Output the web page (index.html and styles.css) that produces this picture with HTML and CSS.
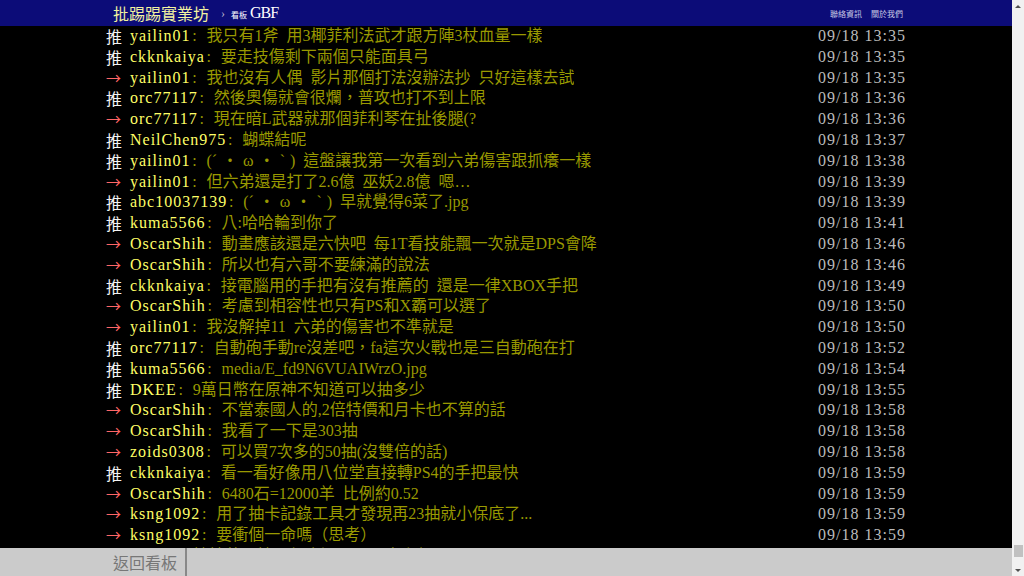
FILE: index.html
```html
<!DOCTYPE html>
<html lang="zh-Hant-TW">
<head>
    <meta charset="UTF-8">
    <meta name="viewport" content="width=device-width, initial-scale=1.0">
    <title>[閒聊] GBF 看板 - 批踢踢實業坊</title>
    <link rel="stylesheet" href="styles.css">
</head>
<body>
    <div class="window">
        <div class="page">
            <div class="topbar">
                <div class="container topbar-inner">
                    <a class="logo" href="#">批踢踢實業坊</a>
                    <span class="caret">›</span>
                    <a class="board" href="#"><span class="board-label">看板</span> GBF</a>
                    <div class="right">
                        <a href="#">聯絡資訊</a>
                        <a href="#">關於我們</a>
                    </div>
                </div>
            </div>

            <div class="main">
                <div class="container">
                    <div class="push"><span class="push-tag">推</span><span class="push-userid">yailin01</span><span class="push-content"><span class="colon">:</span> 我只有1斧 用3椰菲利法武才跟方陣3杖血量一樣</span><span class="push-ipdatetime">09/18 13:35</span></div>
                    <div class="push"><span class="push-tag">推</span><span class="push-userid">ckknkaiya</span><span class="push-content"><span class="colon">:</span> 要走技傷剩下兩個只能面具弓</span><span class="push-ipdatetime">09/18 13:35</span></div>
                    <div class="push"><span class="push-tag arrow">→</span><span class="push-userid">yailin01</span><span class="push-content"><span class="colon">:</span> 我也沒有人偶 影片那個打法沒辦法抄 只好這樣去試</span><span class="push-ipdatetime">09/18 13:35</span></div>
                    <div class="push"><span class="push-tag">推</span><span class="push-userid">orc77117</span><span class="push-content"><span class="colon">:</span> 然後奧傷就會很爛，普攻也打不到上限</span><span class="push-ipdatetime">09/18 13:36</span></div>
                    <div class="push"><span class="push-tag arrow">→</span><span class="push-userid">orc77117</span><span class="push-content"><span class="colon">:</span> 現在暗L武器就那個菲利琴在扯後腿(?</span><span class="push-ipdatetime">09/18 13:36</span></div>
                    <div class="push"><span class="push-tag">推</span><span class="push-userid">NeilChen975</span><span class="push-content"><span class="colon">:</span> 蝴蝶結呢</span><span class="push-ipdatetime">09/18 13:37</span></div>
                    <div class="push"><span class="push-tag">推</span><span class="push-userid">yailin01</span><span class="push-content"><span class="colon">:</span> (<span class="kao">´・ω・`</span>) 這盤讓我第一次看到六弟傷害跟抓癢一樣</span><span class="push-ipdatetime">09/18 13:38</span></div>
                    <div class="push"><span class="push-tag arrow">→</span><span class="push-userid">yailin01</span><span class="push-content"><span class="colon">:</span> 但六弟還是打了2.6億 巫妖2.8億 嗯…</span><span class="push-ipdatetime">09/18 13:39</span></div>
                    <div class="push"><span class="push-tag">推</span><span class="push-userid">abc10037139</span><span class="push-content"><span class="colon">:</span> (<span class="kao">´・ω・`</span>) 早就覺得6菜了.jpg</span><span class="push-ipdatetime">09/18 13:39</span></div>
                    <div class="push"><span class="push-tag">推</span><span class="push-userid">kuma5566</span><span class="push-content"><span class="colon">:</span> 八:哈哈輪到你了</span><span class="push-ipdatetime">09/18 13:41</span></div>
                    <div class="push"><span class="push-tag arrow">→</span><span class="push-userid">OscarShih</span><span class="push-content"><span class="colon">:</span> 動畫應該還是六快吧 每1T看技能飄一次就是DPS會降</span><span class="push-ipdatetime">09/18 13:46</span></div>
                    <div class="push"><span class="push-tag arrow">→</span><span class="push-userid">OscarShih</span><span class="push-content"><span class="colon">:</span> 所以也有六哥不要練滿的說法</span><span class="push-ipdatetime">09/18 13:46</span></div>
                    <div class="push"><span class="push-tag">推</span><span class="push-userid">ckknkaiya</span><span class="push-content"><span class="colon">:</span> 接電腦用的手把有沒有推薦的 還是一律XBOX手把</span><span class="push-ipdatetime">09/18 13:49</span></div>
                    <div class="push"><span class="push-tag arrow">→</span><span class="push-userid">OscarShih</span><span class="push-content"><span class="colon">:</span> 考慮到相容性也只有PS和X霸可以選了</span><span class="push-ipdatetime">09/18 13:50</span></div>
                    <div class="push"><span class="push-tag arrow">→</span><span class="push-userid">yailin01</span><span class="push-content"><span class="colon">:</span> 我沒解掉11 六弟的傷害也不準就是</span><span class="push-ipdatetime">09/18 13:50</span></div>
                    <div class="push"><span class="push-tag">推</span><span class="push-userid">orc77117</span><span class="push-content"><span class="colon">:</span> 自動砲手動re沒差吧，fa這次火戰也是三自動砲在打</span><span class="push-ipdatetime">09/18 13:52</span></div>
                    <div class="push"><span class="push-tag">推</span><span class="push-userid">kuma5566</span><span class="push-content"><span class="colon">:</span> media/E_fd9N6VUAIWrzO.jpg</span><span class="push-ipdatetime">09/18 13:54</span></div>
                    <div class="push"><span class="push-tag">推</span><span class="push-userid">DKEE</span><span class="push-content"><span class="colon">:</span> 9萬日幣在原神不知道可以抽多少</span><span class="push-ipdatetime">09/18 13:55</span></div>
                    <div class="push"><span class="push-tag arrow">→</span><span class="push-userid">OscarShih</span><span class="push-content"><span class="colon">:</span> 不當泰國人的,2倍特價和月卡也不算的話</span><span class="push-ipdatetime">09/18 13:58</span></div>
                    <div class="push"><span class="push-tag arrow">→</span><span class="push-userid">OscarShih</span><span class="push-content"><span class="colon">:</span> 我看了一下是303抽</span><span class="push-ipdatetime">09/18 13:58</span></div>
                    <div class="push"><span class="push-tag arrow">→</span><span class="push-userid">zoids0308</span><span class="push-content"><span class="colon">:</span> 可以買7次多的50抽(沒雙倍的話)</span><span class="push-ipdatetime">09/18 13:58</span></div>
                    <div class="push"><span class="push-tag">推</span><span class="push-userid">ckknkaiya</span><span class="push-content"><span class="colon">:</span> 看一看好像用八位堂直接轉PS4的手把最快</span><span class="push-ipdatetime">09/18 13:59</span></div>
                    <div class="push"><span class="push-tag arrow">→</span><span class="push-userid">OscarShih</span><span class="push-content"><span class="colon">:</span> 6480石=12000羊 比例約0.52</span><span class="push-ipdatetime">09/18 13:59</span></div>
                    <div class="push"><span class="push-tag arrow">→</span><span class="push-userid">ksng1092</span><span class="push-content"><span class="colon">:</span> 用了抽卡記錄工具才發現再23抽就小保底了...</span><span class="push-ipdatetime">09/18 13:59</span></div>
                    <div class="push"><span class="push-tag arrow">→</span><span class="push-userid">ksng1092</span><span class="push-content"><span class="colon">:</span> 要衝個一命嗎（思考）</span><span class="push-ipdatetime">09/18 13:59</span></div>
                    <div class="push"><span class="push-tag">推</span><span class="push-userid">DKEE</span><span class="push-content"><span class="colon">:</span> 抽抽共24抽，保底還可以再去上個</span><span class="push-ipdatetime">09/18 14:00</span></div>
                </div>
            </div>

            <div class="navbar">
                <div class="container">
                    <a class="btn-board" href="#">返回看板</a>
                </div>
            </div>
        </div>

        <div class="scrollbar">
            <span class="scroll-arrow up"></span>
            <span class="scroll-track"><span class="scroll-thumb"></span></span>
            <span class="scroll-arrow down"></span>
        </div>
    </div>
</body>
</html>
```

FILE: styles.css
```css
:root {
    --topbar-bg: #0c0c78; /* navy top bar */
    --page-bg: #000000;
    --nav-bg: #cbcbcb; /* bottom navigation */
    --tag-color: #f4f4f4;
    --arrow-color: #ff6666;
    --userid-color: #ffff66;
    --content-color: #999900;
    --time-color: #bbbbbb;
}
html, body {
    margin: 0;
    padding: 0;
    height: 100%;
    overflow: hidden;
}
body {
    font-family: "Liberation Serif", "Noto Sans CJK TC", serif;
    font-size: 16px;
    background-color: var(--page-bg);
}
a {
    text-decoration: none;
    color: inherit;
}
.window {
    display: flex;
    height: 100%;
}
.page {
    flex: 1;
    display: flex;
    flex-direction: column;
    min-width: 0;
}
.container {
    width: 800px;
    margin: 0 auto;
}

/* top bar */
.topbar {
    background: var(--topbar-bg);
    height: 26px;
    flex: none;
}
.topbar-inner {
    display: flex;
    align-items: center;
    height: 26px;
}
.logo {
    font-family: "Noto Sans CJK TC", sans-serif;
    font-size: 16px;
    line-height: 26px;
    color: #f2f2a0;
    padding-left: 7px;
}
.caret {
    color: #b8b8d0;
    font-size: 12px;
    margin: 0 6px 0 12px;
}
.board {
    color: #ffffff;
    font-size: 16px;
    letter-spacing: -1px;
}
.board-label {
    font-family: "Noto Sans CJK TC", sans-serif;
    font-size: 8px;
    letter-spacing: 0;
}
.right {
    margin-left: auto;
    padding-right: 3px;
    font-family: "Noto Sans CJK TC", sans-serif;
    font-size: 8px;
    display: flex;
    gap: 9px;
}
.right a {
    color: #c8c8e4;
}

/* push list */
.main {
    flex: 1;
    overflow: hidden;
}
.push {
    display: flex;
    line-height: 20.8px;
    height: 20.8px;
    white-space: nowrap;
}
.push-tag {
    display: inline-block;
    width: 24px;
    color: var(--tag-color);
    font-family: "Noto Sans CJK TC", sans-serif;
    flex: none;
}
.push-tag.arrow {
    color: var(--arrow-color);
    font-size: 15px;
}
.push-userid {
    color: var(--userid-color);
    letter-spacing: 1px;
    flex: none;
}
.push-content {
    color: var(--content-color);
    word-spacing: 4px;
    overflow: hidden;
}
.colon {
    display: inline-block;
    width: 8px;
    text-align: center;
}
.kao {
    letter-spacing: 5px;
}
.push-ipdatetime {
    margin-left: auto;
    padding-left: 16px;
    width: 88px;
    color: var(--time-color);
    letter-spacing: 1px;
    flex: none;
}

/* bottom navigation */
.navbar {
    background: var(--nav-bg);
    height: 28px;
    flex: none;
}
.navbar .container {
    display: flex;
    height: 28px;
}
.btn-board {
    font-family: "Noto Sans CJK TC", sans-serif;
    font-size: 16px;
    line-height: 28px;
    color: #777777;
    padding: 0 8px 0 7px;
    border-right: 2px solid #888888;
}

/* window scrollbar */
.scrollbar {
    width: 12px;
    flex: none;
    background: #f1f1f1;
    display: flex;
    flex-direction: column;
    align-items: center;
}
.scroll-arrow {
    height: 12px;
    width: 12px;
    display: flex;
    align-items: center;
    justify-content: center;
}
.scroll-arrow::before {
    content: "";
    border-left: 3px solid transparent;
    border-right: 3px solid transparent;
}
.scroll-arrow.up::before {
    border-bottom: 3px solid #505050;
}
.scroll-arrow.down::before {
    border-top: 3px solid #505050;
}
.scroll-track {
    flex: 1;
    width: 12px;
    display: flex;
    flex-direction: column;
    justify-content: flex-end;
    align-items: center;
    padding-bottom: 7px;
}
.scroll-thumb {
    width: 9px;
    height: 12px;
    background: #c1c1c1;
}
```
